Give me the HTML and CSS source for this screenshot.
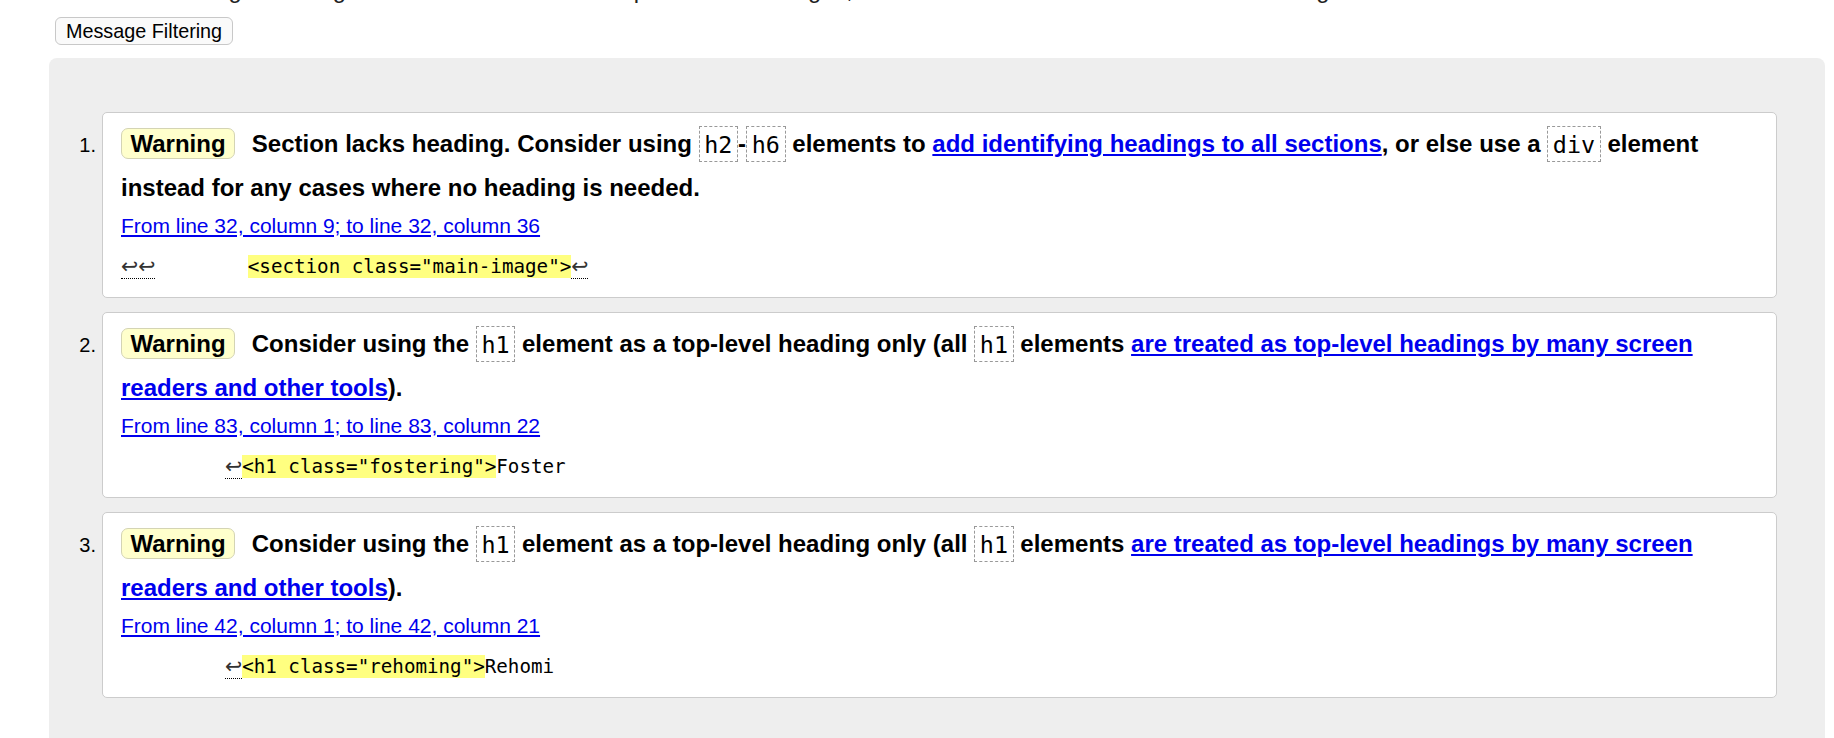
FILE: index.html
```html
<!DOCTYPE html>
<html lang="en">
<head>
<meta charset="utf-8">
<title>Message Filtering</title>
<link rel="stylesheet" href="styles.css">
</head>
<body>
<div class="page">
  <p class="intro">Use the Message Filtering button below to hide/show particular messages, and to see total counts of errors and warnings.</p>
  <button class="filter" type="button">Message Filtering</button>
  <div class="results">
    <div class="msg">
      <span class="num">1.</span>
      <div class="card">
        <p class="title"><span class="badge">Warning</span> Section lacks heading. Consider using <code>h2</code>-<code>h6</code> elements to <a href="#">add identifying headings to all sections</a>, or else use a <code>div</code> element instead for any cases where no heading is needed.</p>
        <p class="loc"><a href="#">From line 32, column 9; to line 32, column 36</a></p>
        <p class="extract"><span class="lf">↩↩</span>        <mark>&lt;section class="main-image"&gt;</mark><span class="lf">↩</span></p>
      </div>
    </div>
    <div class="msg">
      <span class="num">2.</span>
      <div class="card">
        <p class="title"><span class="badge">Warning</span> Consider using the <code>h1</code> element as a top-level heading only (all <code>h1</code> elements <a href="#">are treated as top-level headings by many screen readers and other tools</a>).</p>
        <p class="loc"><a href="#">From line 83, column 1; to line 83, column 22</a></p>
        <p class="extract">         <span class="lf">↩</span><mark>&lt;h1 class="fostering"&gt;</mark>Foster</p>
      </div>
    </div>
    <div class="msg">
      <span class="num">3.</span>
      <div class="card">
        <p class="title"><span class="badge">Warning</span> Consider using the <code>h1</code> element as a top-level heading only (all <code>h1</code> elements <a href="#">are treated as top-level headings by many screen readers and other tools</a>).</p>
        <p class="loc"><a href="#">From line 42, column 1; to line 42, column 21</a></p>
        <p class="extract">         <span class="lf">↩</span><mark>&lt;h1 class="rehoming"&gt;</mark>Rehomi</p>
      </div>
    </div>
  </div>
</div>
</body>
</html>
```

FILE: styles.css
```css
html, body {
  margin: 0;
  padding: 0;
  overflow: hidden;
  background: #fff;
}
body {
  font-family: "Liberation Sans", Arial, sans-serif;
  color: #000;
}
.page {
  padding: 0 9px 0 49px;
}
.intro {
  margin: -22px 0 0 21px;
  font-size: 23.75px;
  line-height: 24px;
  color: #222;
  white-space: nowrap;
}
.filter {
  display: block;
  margin: 15px 0 0 6px;
  height: 28px;
  padding: 0 10px;
  font-family: "Liberation Sans", Arial, sans-serif;
  font-size: 19.8px;
  line-height: 26px;
  color: #000;
  background: #fafafa;
  border: 1px solid #c8c8c8;
  border-radius: 6px;
}
.results {
  margin-top: 13px;
  background: #eeeeee;
  border-radius: 8px 8px 0 0;
  padding: 54px 48px 44px 0;
}
.msg {
  display: flex;
  align-items: baseline;
  margin-bottom: 14px;
}
.msg:last-child {
  margin-bottom: 0;
}
.num {
  flex: 0 0 53px;
  box-sizing: border-box;
  padding-right: 6px;
  text-align: right;
  font-size: 20px;
}
.card {
  flex: 1;
  background: #fff;
  border: 1px solid #cccccc;
  border-radius: 5px;
  padding: 9px 18px 15px 18px;
}
.title {
  margin: 0 0 1px;
  font-weight: bold;
  font-size: 24px;
  line-height: 44px;
}
.badge {
  display: inline-block;
  background: #ffffcc;
  border: 1px solid #d4d4b4;
  border-radius: 7px;
  padding: 1px 8.5px;
  line-height: 27px;
  margin-right: 10px;
}
.title code {
  font-family: "DejaVu Sans Mono", monospace;
  font-weight: normal;
  font-size: 23.4px;
  line-height: 1;
  border: 1px dashed #999;
  padding: 3.5px 4.7px 3px;
}
a {
  color: #0000ee;
}
.loc {
  margin: 0 0 10px;
  font-size: 21px;
  line-height: 30px;
}
.extract {
  margin: 0;
  font-family: "DejaVu Sans Mono", monospace;
  font-size: 19.2px;
  line-height: 30px;
  white-space: pre;
}
.extract mark {
  background: #ffff80;
  color: #000;
}
.lf {
  font-family: "DejaVu Sans", sans-serif;
  font-size: 20.5px;
  color: #333;
  border-bottom: 1px dotted #000;
}
```
